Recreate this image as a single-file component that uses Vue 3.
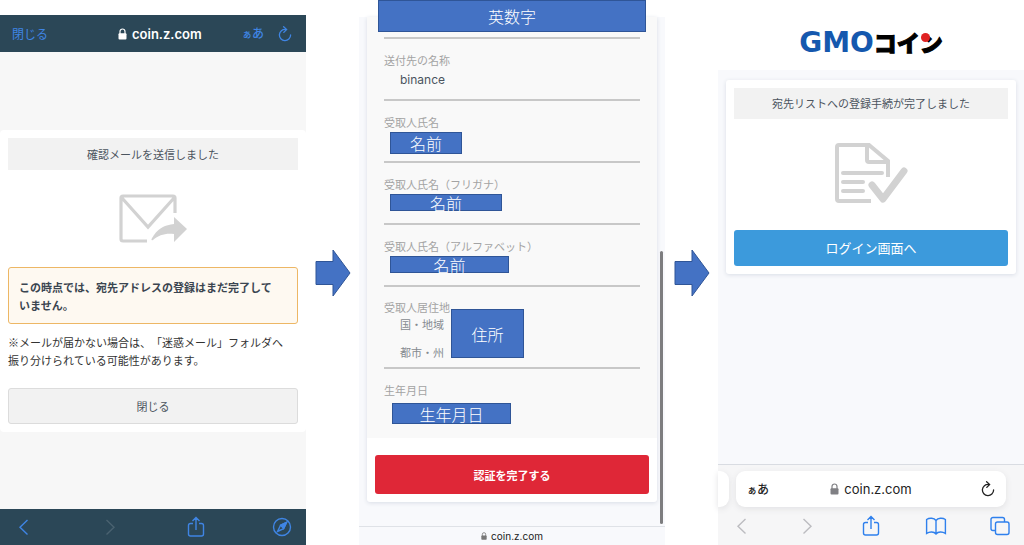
<script setup>
const detailFields = [
  { label: '受取人氏名', value: '名前', size: 'tall' },
  { label: '受取人氏名（フリガナ）', value: '名前', size: 'medium' },
  { label: '受取人氏名（アルファベット）', value: '名前', size: 'wide' },
]
</script>

<template>
  <main class="flow">
    <section class="phone sent">
      <header class="dark-bar address-bar">
        <button type="button" class="link-btn">閉じる</button>
        <span class="site">
          <svg class="lock" viewBox="0 0 9 12" aria-hidden="true">
            <path d="M2 6V3.5a2.5 2.5 0 0 1 5 0V6" fill="none" stroke="currentColor" stroke-width="1.2" />
            <rect x="0.5" y="5.2" width="8" height="6.3" rx="1" fill="currentColor" />
          </svg>
          coin.z.com
        </span>
        <span class="tools">
          <button type="button" class="aa" aria-label="表示設定"><small>ぁ</small>あ</button>
          <button type="button" aria-label="再読み込み">
            <svg class="reload" viewBox="0 0 14 16" aria-hidden="true">
              <path d="M7.6 3.4A5.6 5.6 0 1 0 12.6 9M5.6 0.8 8.6 3.5 5.8 6.4" />
            </svg>
          </button>
        </span>
      </header>
      <div class="sent-body">
        <div class="sent-card">
          <h2 class="title">確認メールを送信しました</h2>
          <svg class="mail" viewBox="0 0 70 50" aria-hidden="true">
            <path d="M57 19V4a2 2 0 0 0-2-2H5a2 2 0 0 0-2 2v41a2 2 0 0 0 2 2h24M4 4l26 29L56 4" fill="none" stroke="#d2d2d2" stroke-width="3.2" />
            <path d="M56 23 69 35 56 48V40C47 39 41 41 35 46 32 47 34 44 36 41 41 34 47 31 56 30Z" fill="#d2d2d2" />
          </svg>
          <p class="alert">この時点では、宛先アドレスの登録はまだ完了して<br>いません。</p>
          <p class="note">※メールが届かない場合は、「迷惑メール」フォルダへ<br>振り分けられている可能性があります。</p>
          <button type="button" class="close">閉じる</button>
        </div>
      </div>
      <nav class="dark-bar toolbar">
        <button type="button" aria-label="戻る"><svg class="ico" viewBox="0 0 24 24"><path d="M15.5 5 8 12.2 15.5 19.5" /></svg></button>
        <button type="button" class="dim" aria-label="進む"><svg class="ico" viewBox="0 0 24 24"><path d="M8.5 5 16 12.2 8.5 19.5" /></svg></button>
        <button type="button" aria-label="共有"><svg class="ico" viewBox="0 0 24 24"><path d="M9 8.5H6.5a2 2 0 0 0-2 2V19a2 2 0 0 0 2 2h11a2 2 0 0 0 2-2v-8.500a2 2 0 0 0-2-2H15M12 15V2.500M8.500 6 12 2.500 15.500 6" /></svg></button>
        <button type="button" aria-label="ブラウザで開く">
          <svg class="ico" viewBox="0 0 24 24"><circle cx="12" cy="12" r="8.5" /><path d="M16.5 7.500 10.600 10.300 7.500 16.500 13.600 13.600Z" /><path d="M16.500 7.500 10.600 10.300 13.600 13.600Z" fill="currentColor" /></svg>
        </button>
      </nav>
    </section>

    <svg class="arrow" viewBox="0 0 36 48" aria-hidden="true"><path d="M1 12.500H18V1L35 24 18 47V35.500H1Z" /></svg>

    <section class="phone confirm">
      <div class="confirm-body">
        <div class="confirm-card">
          <div class="details">
            <div class="mask banner">英数字</div>
            <dl>
              <div class="field">
                <dt>送付先の名称</dt>
                <dd class="plain">binance</dd>
              </div>
              <div v-for="f in detailFields" :key="f.label" class="field">
                <dt>{{ f.label }}</dt>
                <dd class="mask" :class="f.size">{{ f.value }}</dd>
              </div>
              <div class="field residence">
                <dt>受取人居住地</dt>
                <dd class="sub">国・地域</dd>
                <dd class="sub">都市・州</dd>
                <dd class="mask address">住所</dd>
              </div>
              <div class="field birth">
                <dt>生年月日</dt>
                <dd class="mask date">生年月日</dd>
              </div>
            </dl>
          </div>
          <button type="button" class="finish">認証を完了する</button>
        </div>
      </div>
      <div class="scroll-thumb"></div>
      <footer class="mini-bar">
        <svg class="lock" viewBox="0 0 9 12" aria-hidden="true">
          <path d="M2 6V3.500a2.500 2.500 0 0 1 5 0V6" fill="none" stroke="currentColor" stroke-width="1.200" />
          <rect x="0.500" y="5.200" width="8" height="6.300" rx="1" fill="currentColor" />
        </svg>
        <span>coin.z.com</span>
      </footer>
    </section>

    <svg class="arrow" viewBox="0 0 36 48" aria-hidden="true"><path d="M1 12.500H18V1L35 24 18 47V35.500H1Z" /></svg>

    <section class="phone done">
      <header class="brand">
        <span class="gmo">GMO</span><span class="coin">コイ<span class="n">ン</span></span>
      </header>
      <div class="done-body">
        <div class="done-card">
          <h2 class="title">宛先リストへの登録手続が完了しました</h2>
          <svg class="doc" viewBox="0 0 74 62" aria-hidden="true">
            <g fill="none" stroke="#d2d2d2" stroke-width="4">
              <path d="M37 59H5a2 2 0 0 1-2-2V5a2 2 0 0 1 2-2H35L54 19V35M33 3V18a2 2 0 0 0 2 2H54" />
              <path d="M9 31H48M9 40H29M9 49H29" stroke-linecap="round" />
              <path d="M38 43 49 57 70 29" stroke-width="7" stroke-linecap="round" stroke-linejoin="round" />
            </g>
          </svg>
          <button type="button" class="login">ログイン画面へ</button>
        </div>
      </div>
      <footer class="safari">
        <div class="tabs">
          <span class="prev-tab"></span>
          <div class="pill">
            <button type="button" class="aa" aria-label="表示設定"><small>ぁ</small>あ</button>
            <span class="site">
              <svg class="lock" viewBox="0 0 9 12" aria-hidden="true">
                <path d="M2 6V3.500a2.500 2.500 0 0 1 5 0V6" fill="none" stroke="currentColor" stroke-width="1.200" />
                <rect x="0.500" y="5.200" width="8" height="6.300" rx="1" fill="currentColor" />
              </svg>
              coin.z.com
            </span>
            <button type="button" class="end" aria-label="再読み込み">
              <svg class="reload" viewBox="0 0 14 16" aria-hidden="true">
                <path d="M7.600 3.400A5.600 5.600 0 1 0 12.600 9M5.600 0.800 8.600 3.500 5.800 6.400" />
              </svg>
            </button>
          </div>
        </div>
        <nav class="toolbar">
          <button type="button" class="dim" aria-label="戻る"><svg class="ico" viewBox="0 0 24 24"><path d="M15.500 5 8 12.200 15.500 19.500" /></svg></button>
          <button type="button" class="dim" aria-label="進む"><svg class="ico" viewBox="0 0 24 24"><path d="M8.500 5 16 12.200 8.500 19.500" /></svg></button>
          <button type="button" aria-label="共有"><svg class="ico" viewBox="0 0 24 24"><path d="M9 8.500H6.500a2 2 0 0 0-2 2V19a2 2 0 0 0 2 2h11a2 2 0 0 0 2-2v-8.500a2 2 0 0 0-2-2H15M12 15V2.500M8.500 6 12 2.500 15.500 6" /></svg></button>
          <button type="button" aria-label="ブックマーク"><svg class="ico" viewBox="0 0 24 24"><path d="M12 6.500C10 3.800 5.500 3.500 2.600 5.500V19.500C5.500 17.500 10 17.500 12 20 14 17.500 18.500 17.500 21.400 19.500V5.500C18.500 3.500 14 3.800 12 6.500V20" /></svg></button>
          <button type="button" aria-label="タブ"><svg class="ico" viewBox="0 0 24 24"><rect x="7.500" y="8" width="13.500" height="12.500" rx="2" /><path d="M7.500 16.500H5a2 2 0 0 1-2-2V5.500a2 2 0 0 1 2-2H14.500a2 2 0 0 1 2 2V8" /></svg></button>
        </nav>
      </footer>
    </section>
  </main>
</template>

<style>
body {
  margin: 0;
  background: #fff;
}
</style>

<style scoped>
.flow {
  display: grid;
  grid-template-columns: 306fr 53fr 306fr 53fr 306fr;
  min-height: 100vh;
  background: #fff;
  font-family: "Noto Sans CJK JP", "Liberation Sans", sans-serif;
  font-size: 11px;
  line-height: 18px;
  text-spacing-trim: space-all;
  color: #4b545e;
}

.flow *,
.flow {
  box-sizing: border-box;
}

button {
  border: 0;
  padding: 0;
  background: none;
  color: inherit;
  font: inherit;
  cursor: pointer;
}

h2,
p,
dl,
dd {
  margin: 0;
}

svg {
  display: block;
}

.phone {
  display: flex;
  flex-direction: column;
  position: relative;
  min-width: 0;
}

.arrow {
  width: 36px;
  height: 48px;
  place-self: center;
  fill: #4472c4;
  stroke: #2f5597;
}

.title {
  background: #f2f2f2;
  font-size: 11px;
  font-weight: 400;
  text-align: center;
}

.lock {
  width: 9px;
  height: 12px;
}

.site {
  display: flex;
  align-items: center;
  gap: 5px;
  font-family: Inter, sans-serif;
  font-size: 13px;
}

.aa {
  font-size: 12px;
  font-weight: 500;
}

.aa small {
  font-size: 10px;
}

.reload {
  width: 14px;
  height: 16px;
  fill: none;
  stroke: currentColor;
  stroke-width: 1.3;
  stroke-linecap: round;
}

.toolbar {
  display: flex;
  justify-content: space-between;
  align-items: center;
  height: 36px;
  padding: 0 12px;
}

.ico {
  width: 24px;
  height: 24px;
  fill: none;
  stroke: currentColor;
  stroke-width: 1.4;
}

/* Mail sent */
.sent {
  margin-top: 15px;
}

.dark-bar {
  background: #2b4757;
  color: #3f85e4;
}

.address-bar {
  display: grid;
  grid-template-columns: 106px 1fr auto;
  align-items: center;
  height: 37px;
  padding: 0 14px 0 12px;
}

.link-btn {
  font-size: 12px;
  text-align: left;
}

.sent .site {
  color: #fff;
  font-weight: 600;
}

.tools {
  display: flex;
  align-items: center;
  gap: 14px;
}

.dark-bar .dim {
  color: #4a6270;
}

.sent-body {
  flex: 1;
  display: flex;
  flex-direction: column;
  justify-content: center;
  background: #f7f7f7;
}

.sent-card {
  padding: 8px;
  border-radius: 4px;
  background: #fff;
}

.sent .title {
  line-height: 32px;
}

.mail {
  width: 70px;
  height: 50px;
  margin: 24px auto 23px;
}

.alert {
  padding: 10px 10px 9px;
  border: 1px solid #edb765;
  border-radius: 3px;
  background: #fef9f1;
  color: #3b4550;
  font-weight: 700;
  white-space: nowrap;
}

.note {
  margin: 9px 0 19px;
  color: #333;
  white-space: nowrap;
}

.close {
  width: 100%;
  height: 36px;
  border: 1px solid #dcdcdc;
  border-radius: 3px;
  background: #f2f2f2;
}

/* Confirmation */
.confirm {
  margin-top: 17px;
  background: #f8f9fc;
}

.confirm-body {
  flex: 1;
  padding: 0 8px 24px;
}

.confirm-card {
  display: grid;
  gap: 17px;
  padding-bottom: 8px;
  border-radius: 0 0 3px 3px;
  background: #fff;
  box-shadow: 0 1px 4px #d9dde6;
}

.details {
  padding: 0 17px 14px;
  background: #f9f9f9;
}

.mask {
  display: flex;
  align-items: center;
  justify-content: center;
  border: 1px solid #2f5597;
  background: #4472c4;
  color: #fff;
  font-size: 16px;
  font-weight: 300;
  line-height: 14px;
}

.banner {
  height: 32px;
  margin: -17px -6px 5px;
}

.field {
  height: 62px;
  padding-top: 12px;
  border-top: 2px solid #c8c8c8;
}

dt {
  line-height: 18px;
  color: #a3a3a3;
}

.plain {
  padding-left: 16px;
  font-family: Inter, sans-serif;
  font-size: 12px;
  line-height: 22px;
}

.field .mask {
  margin: 1px 0 0 6px;
}

.field .tall {
  width: 72px;
  height: 22px;
}

.field .medium {
  width: 112px;
  height: 17px;
}

.field .wide {
  width: 119px;
  height: 17px;
}

.residence {
  position: relative;
  height: 82px;
}

.residence dt {
  line-height: 17px;
}

.sub {
  margin-bottom: 12px;
  padding-left: 16px;
  line-height: 16px;
  color: #858a90;
}

.field .address {
  position: absolute;
  top: 22px;
  left: 67px;
  width: 73px;
  height: 49px;
  margin: 0;
}

.birth {
  height: auto;
}

.field .date {
  width: 119px;
  height: 21px;
  margin: 4px 0 0 8px;
}

.finish {
  height: 39px;
  margin: 0 8px;
  border-radius: 3px;
  background: #df2737;
  color: #fff;
  font-weight: 700;
}

.scroll-thumb {
  position: absolute;
  top: 234px;
  right: 2px;
  bottom: 21px;
  width: 3px;
  border-radius: 2px;
  background: #7d7d7f;
}

.mini-bar {
  display: flex;
  align-items: center;
  justify-content: center;
  gap: 4px;
  height: 19px;
  border-top: 1px solid #dfe2e7;
  font-family: Inter, sans-serif;
  font-size: 10px;
  color: #222;
}

.mini-bar .lock {
  width: 6px;
  height: 8px;
  color: #777;
}

/* Registration complete */
.brand {
  display: flex;
  align-items: baseline;
  justify-content: center;
  height: 70px;
  padding-top: 24px;
  font-weight: 700;
  line-height: 36px;
}

.gmo {
  font-family: "DejaVu Sans", sans-serif;
  font-size: 28px;
  color: #1558ae;
}

.coin {
  font-size: 23px;
  font-weight: 900;
  color: #000;
  -webkit-text-stroke: 1px #000;
}

.n {
  position: relative;
}

.n::before {
  content: "";
  position: absolute;
  top: 8px;
  left: 1px;
  width: 9px;
  height: 9px;
  border-radius: 50%;
  background: #e02222;
}

.done-body {
  flex: 1;
  padding: 10px 8px;
  background: #f8f9fc;
}

.done-card {
  padding: 8px;
  border-radius: 3px;
  background: #fff;
  box-shadow: 0 1px 4px #d9dde6;
}

.done .title {
  line-height: 31px;
}

.doc {
  width: 74px;
  height: 62px;
  margin: 23px auto 26px;
}

.login {
  width: 100%;
  height: 36px;
  border-radius: 3px;
  background: #3c9adc;
  color: #fff;
  font-size: 13px;
}

.safari {
  border-top: 1px solid #d9dce2;
  background: #f6f6f7;
}

.tabs {
  display: flex;
  gap: 7px;
  padding: 6px 18px 0 0;
}

.prev-tab {
  width: 11px;
  border-radius: 0 9px 9px 0;
  background: #fff;
  box-shadow: 0 2px 6px #e2e2e4;
}

.pill {
  flex: 1;
  display: grid;
  grid-template-columns: 1fr auto 1fr;
  align-items: center;
  height: 36px;
  padding: 0 11px;
  border-radius: 9px;
  background: #fff;
  box-shadow: 0 2px 6px #e2e2e4;
  color: #222;
}

.pill .aa {
  justify-self: start;
}

.pill .lock {
  color: #808084;
}

.end {
  justify-self: end;
}

.safari .toolbar {
  height: 38px;
  color: #2f80ed;
}

.safari .dim {
  color: #bcbcc0;
}
</style>
